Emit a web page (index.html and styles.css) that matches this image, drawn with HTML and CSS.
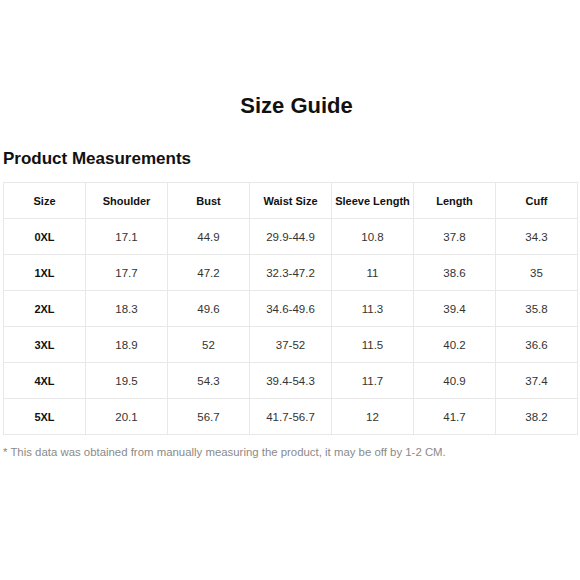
FILE: index.html
```html
<!DOCTYPE html>
<html>
<head>
<meta charset="utf-8">
<link rel="stylesheet" href="styles.css">
</head>
<body>
<div class="page">
  <h1 class="title">Size Guide</h1>
  <h2 class="subtitle">Product Measurements</h2>
  <table class="sizes">
    <thead>
      <tr><th>Size</th><th>Shoulder</th><th>Bust</th><th>Waist Size</th><th>Sleeve Length</th><th>Length</th><th>Cuff</th></tr>
    </thead>
    <tbody>
      <tr><th>0XL</th><td>17.1</td><td>44.9</td><td>29.9-44.9</td><td>10.8</td><td>37.8</td><td>34.3</td></tr>
      <tr><th>1XL</th><td>17.7</td><td>47.2</td><td>32.3-47.2</td><td>11</td><td>38.6</td><td>35</td></tr>
      <tr><th>2XL</th><td>18.3</td><td>49.6</td><td>34.6-49.6</td><td>11.3</td><td>39.4</td><td>35.8</td></tr>
      <tr><th>3XL</th><td>18.9</td><td>52</td><td>37-52</td><td>11.5</td><td>40.2</td><td>36.6</td></tr>
      <tr><th>4XL</th><td>19.5</td><td>54.3</td><td>39.4-54.3</td><td>11.7</td><td>40.9</td><td>37.4</td></tr>
      <tr><th>5XL</th><td>20.1</td><td>56.7</td><td>41.7-56.7</td><td>12</td><td>41.7</td><td>38.2</td></tr>
    </tbody>
  </table>
  <p class="note">* This data was obtained from manually measuring the product, it may be off by 1-2 CM.</p>
</div>
</body>
</html>
```
FILE: styles.css
```css
html, body {
  margin: 0;
  padding: 0;
  background: #fff;
}
.page {
  padding: 93px 2px 0 3px;
  font-family: "Liberation Sans", Arial, sans-serif;
  color: #111;
}
.title {
  margin: 0;
  text-align: center;
  font-size: 22px;
  line-height: 26px;
  font-weight: bold;
  padding-left: 12px;
}
.subtitle {
  margin: 30px 0 0 0;
  font-size: 17px;
  line-height: 20px;
  font-weight: bold;
}
.sizes {
  margin-top: 13px;
  width: 575px;
  border-collapse: collapse;
  table-layout: fixed;
}
.sizes th, .sizes td {
  border: 1px solid #e8e8e8;
  height: 35px;
  padding: 0;
  text-align: center;
  font-size: 11px;
}
.sizes th {
  font-weight: bold;
  color: #111;
}
.sizes td {
  color: #333;
  font-size: 11.5px;
}
.note {
  margin: 11px 0 0 0;
  font-size: 11.4px;
  color: #8a8a8a;
}
```
